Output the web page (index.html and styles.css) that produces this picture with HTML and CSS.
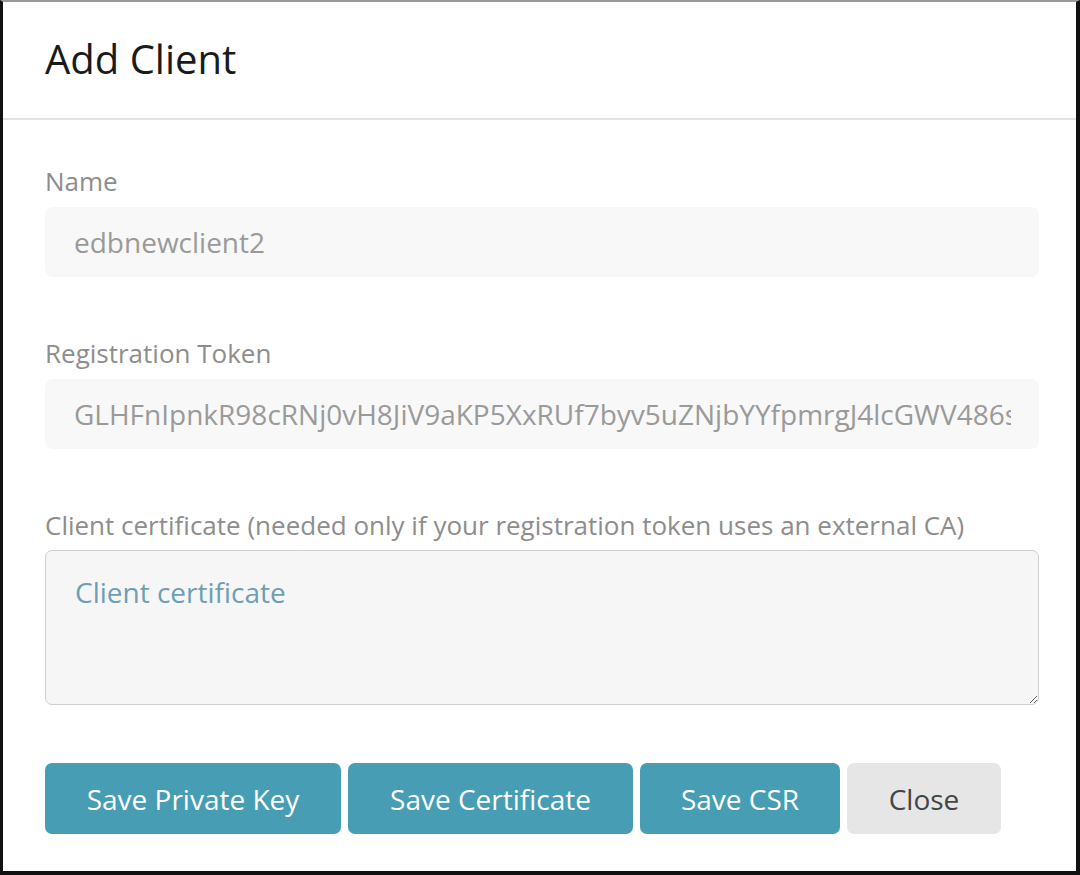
FILE: index.html
```html
<!DOCTYPE html>
<html lang="en">
<head>
<meta charset="utf-8">
<title>Add Client</title>
<link rel="stylesheet" href="styles.css">
</head>
<body>
<div class="frame">
  <div class="header">
    <h1 class="title">Add Client</h1>
  </div>
  <div class="content">
    <div class="field">
      <label class="label" for="name">Name</label>
      <input class="input" id="name" type="text" readonly value="edbnewclient2">
    </div>
    <div class="field">
      <label class="label" for="token">Registration Token</label>
      <input class="input" id="token" type="text" readonly value="GLHFnIpnkR98cRNj0vH8JiV9aKP5XxRUf7byv5uZNjbYYfpmrgJ4lcGWV486sKx2">
    </div>
    <div class="field field-last">
      <label class="label" for="cert">Client certificate (needed only if your registration token uses an external CA)</label>
      <textarea class="textarea" id="cert" placeholder="Client certificate"></textarea>
    </div>
    <div class="actions">
      <button class="btn btn-primary btn-key">Save Private Key</button>
      <button class="btn btn-primary btn-cert">Save Certificate</button>
      <button class="btn btn-primary btn-csr">Save CSR</button>
      <button class="btn btn-default btn-close">Close</button>
    </div>
  </div>
</div>
</body>
</html>
```

FILE: styles.css
```css
* { box-sizing: border-box; }
html, body { margin: 0; padding: 0; background: #fff; }
body { font-family: "Open Sans", "Liberation Sans", sans-serif; }

.frame {
  width: 1080px;
  height: 875px;
  border-style: solid;
  border-color: #111;
  border-width: 2px 4px 4px 3px;
  border-top-color: #9a9a9a;
  background: #fff;
  overflow: hidden;
}

.header {
  height: 118px;
  border-bottom: 2px solid #e2e2e2;
  padding-left: 42px;
  display: flex;
  align-items: center;
}
.title {
  margin: 0;
  font-weight: 400;
  font-size: 40px;
  color: #1a1a1a;
  line-height: 1;
  padding-bottom: 2px;
}

.content {
  padding: 45px 37px 0 42px;
}

.field { margin-bottom: 60px; }
.field-last { margin-bottom: 58px; }

.label {
  display: block;
  font-size: 26px;
  line-height: 32px;
  color: #8d8d8d;
  margin-bottom: 10px;
}

.input {
  display: block;
  width: 100%;
  height: 70px;
  margin: 0;
  border: none;
  outline: none;
  background: #f8f8f8;
  border-radius: 8px;
  padding: 0 28px 0 29px;
  font-family: "Open Sans", "Liberation Sans", sans-serif;
  font-size: 28px;
  line-height: 70px;
  color: #9a9a9a;
}

.textarea {
  display: block;
  width: 100%;
  height: 155px;
  margin-top: -1px;
  background: #f6f6f6;
  border: 1.5px solid #cfcfcf;
  border-radius: 7px;
  padding: 22px 29px;
  font-family: "Open Sans", "Liberation Sans", sans-serif;
  font-size: 28px;
  line-height: 38px;
  color: #555;
  resize: vertical;
}
.textarea::placeholder { color: #6d9fb4; opacity: 1; }

.actions {
  display: flex;
  gap: 7px;
}
.btn {
  height: 71px;
  border: none;
  border-radius: 7px;
  font-family: "Open Sans", "Liberation Sans", sans-serif;
  font-size: 28px;
  padding: 0;
  cursor: pointer;
}
.btn-primary { background: #469db4; color: #fff; }
.btn-default { background: #e6e6e6; color: #444; }
.btn-key { width: 296px; }
.btn-cert { width: 285px; }
.btn-csr { width: 200px; }
.btn-close { width: 154px; }
```
